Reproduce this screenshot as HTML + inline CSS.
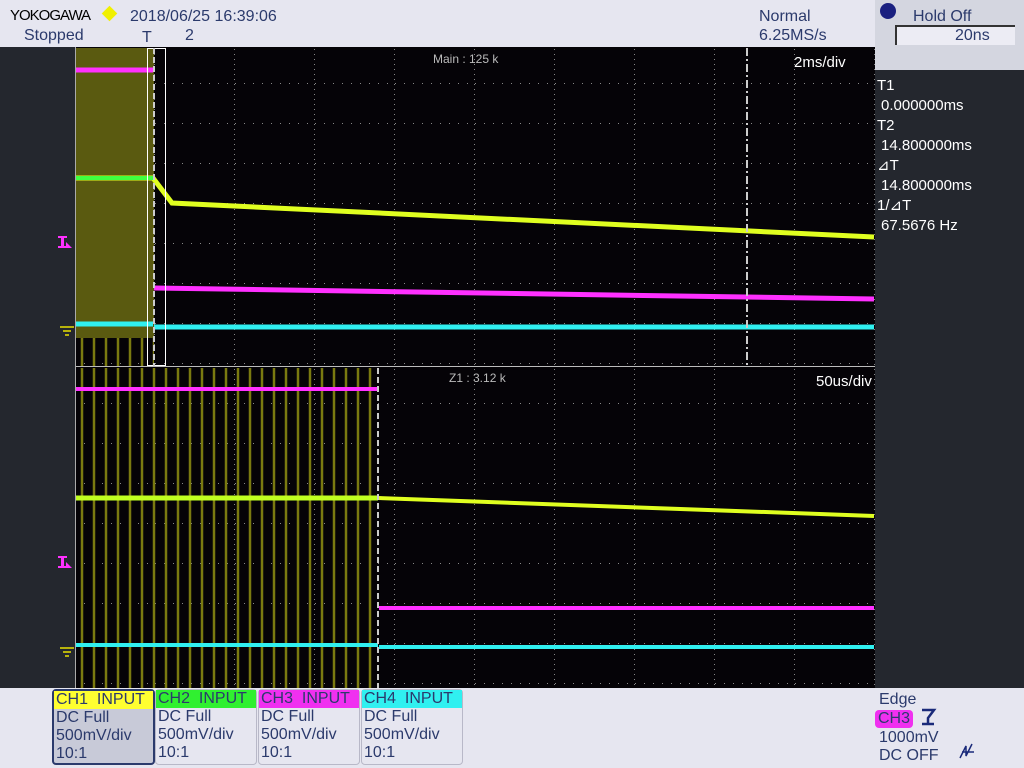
<!DOCTYPE html>
<html><head><style>
body{margin:0;width:1024px;height:768px;overflow:hidden;background:#e6e6f0;font-family:"Liberation Sans",sans-serif;position:relative}
.t{position:absolute;color:#2b3a6c;font-size:16px;white-space:nowrap;line-height:18px}
.w{position:absolute;color:#fff;font-size:15px;white-space:nowrap;line-height:20px}
.ch{position:absolute;top:689px;width:100px;height:74px;border:1px solid #b8b8c8;border-radius:4px;background:#e6e6f0;font-size:16px;color:#2b3a6c;line-height:18px}
.ch div{height:18px;padding-left:2px}
</style></head><body>
<div style="position:absolute;left:0;top:47px;width:75px;height:641px;background:#24272e"></div>
<div style="position:absolute;left:875px;top:70px;width:149px;height:618px;background:#24272e"></div>
<div style="position:absolute;left:875px;top:0;width:149px;height:70px;background:#d4d6e0"></div>
<div class="t" style="left:10px;top:7px;color:#000;font-size:15px;letter-spacing:-1px">YOKOGAWA</div>
<div style="position:absolute;left:104px;top:8px;width:11px;height:11px;background:#f0f000;transform:rotate(45deg)"></div>
<div class="t" style="left:130px;top:8px">2018/06/25 16:39:06</div>
<div class="t" style="left:24px;top:27px">Stopped</div>
<div class="t" style="left:142px;top:29px">T</div>
<div class="t" style="left:185px;top:27px">2</div>
<div class="t" style="left:759px;top:8px">Normal</div>
<div class="t" style="left:759px;top:27px">6.25MS/s</div>
<div style="position:absolute;left:880px;top:3px;width:16px;height:16px;border-radius:50%;background:#1a2080"></div>
<div class="t" style="left:913px;top:8px">Hold Off</div>
<div style="position:absolute;left:895px;top:25px;width:118px;height:18px;border-top:2px solid #333;border-left:2px solid #333;background:#ececf4"></div>
<div class="t" style="left:955px;top:27px">20ns</div>
<div class="w" style="left:877px;top:76px">T1</div>
<div class="w" style="left:881px;top:96px">0.000000ms</div>
<div class="w" style="left:877px;top:116px">T2</div>
<div class="w" style="left:881px;top:136px">14.800000ms</div>
<div class="w" style="left:877px;top:156px">⊿T</div>
<div class="w" style="left:881px;top:176px">14.800000ms</div>
<div class="w" style="left:877px;top:196px">1/⊿T</div>
<div class="w" style="left:881px;top:216px">67.5676 Hz</div>
<svg style="position:absolute;left:0;top:0" width="1024" height="768">
<defs>
<pattern id="g" x="75" y="4" width="80" height="40" patternUnits="userSpaceOnUse">
<line x1="79.5" y1="0" x2="79.5" y2="40" stroke="#888" stroke-dasharray="1 4"/>
<line x1="0" y1="39.5" x2="80" y2="39.5" stroke="#888" stroke-dasharray="1 8"/>
</pattern>
<pattern id="sp" x="80" y="0" width="12" height="400" patternUnits="userSpaceOnUse">
<line x1="2" y1="0" x2="2" y2="400" stroke="#7a7a10" stroke-width="2.5"/>
</pattern>
</defs>
<rect x="75" y="47" width="800" height="641" fill="#050307"/>
<rect x="75" y="47" width="800" height="641" fill="url(#g)"/>
<line x1="75" y1="366.5" x2="875" y2="366.5" stroke="#bbb"/>
<line x1="75.5" y1="47" x2="75.5" y2="688" stroke="#aaa"/>
<rect x="76" y="48" width="78" height="290" fill="#5a5a10"/>
<rect x="76" y="338" width="78" height="28" fill="url(#sp)"/>
<line x1="76" y1="70" x2="153" y2="70" stroke="#ff30ff" stroke-width="5"/>
<polyline points="76,178 153,178 172,203 874,237" fill="none" stroke="#e0ff20" stroke-width="5"/>
<polyline points="76,178 153,178" stroke="#40ff40" stroke-width="4"/>
<line x1="154" y1="288" x2="874" y2="299" stroke="#ff30ff" stroke-width="5"/>
<line x1="76" y1="324" x2="153" y2="324" stroke="#30f0f0" stroke-width="5"/>
<line x1="154" y1="327" x2="874" y2="327" stroke="#30f0f0" stroke-width="5"/>
<rect x="147.5" y="48.5" width="18" height="317" fill="none" stroke="#fff"/>
<line x1="154" y1="48" x2="154" y2="366" stroke="#ccc" stroke-width="2" stroke-dasharray="6 3"/>
<line x1="747" y1="48" x2="747" y2="366" stroke="#ccc" stroke-width="2" stroke-dasharray="8 3 2 3"/>
<text x="433" y="63" fill="#bbb" font-size="12" font-family="Liberation Sans">Main : 125 k</text>
<text x="794" y="67" fill="#fff" font-size="15" font-family="Liberation Sans">2ms/div</text>
<rect x="76" y="368" width="302" height="320" fill="url(#sp)"/>
<line x1="76" y1="389" x2="378" y2="389" stroke="#ff30ff" stroke-width="4"/>
<line x1="76" y1="498" x2="378" y2="498" stroke="#c0ff20" stroke-width="5"/>
<line x1="378" y1="498" x2="874" y2="516" stroke="#e0ff20" stroke-width="4"/>
<line x1="379" y1="608" x2="874" y2="608" stroke="#ff30ff" stroke-width="4"/>
<line x1="76" y1="645" x2="378" y2="645" stroke="#30f0f0" stroke-width="4"/>
<line x1="379" y1="647" x2="874" y2="647" stroke="#30f0f0" stroke-width="4"/>
<line x1="378" y1="368" x2="378" y2="688" stroke="#ccc" stroke-width="2" stroke-dasharray="6 3"/>
<text x="449" y="382" fill="#bbb" font-size="12" font-family="Liberation Sans">Z1 : 3.12 k</text>
<text x="816" y="386" fill="#fff" font-size="15" font-family="Liberation Sans">50us/div</text>
<g fill="#ff30ff"><rect x="58" y="236" width="9" height="2"/><rect x="61" y="236" width="3" height="12"/><rect x="58" y="246" width="9" height="2"/><path d="M66 242l6 6h-6z"/>
<rect x="58" y="556" width="9" height="2"/><rect x="61" y="556" width="3" height="12"/><rect x="58" y="566" width="9" height="2"/><path d="M66 562l6 6h-6z"/></g>
<g stroke="#e8e000" stroke-width="1.5"><line x1="60" y1="327" x2="74" y2="327"/><line x1="63" y1="331" x2="71" y2="331"/><line x1="65" y1="335" x2="69" y2="335"/>
<line x1="60" y1="648" x2="74" y2="648"/><line x1="63" y1="652" x2="71" y2="652"/><line x1="65" y1="656" x2="69" y2="656"/></g>
<path d="M922 710h12l-6 8v6M922 724h12" fill="none" stroke="#1a2a7a" stroke-width="2.5"/>
<path d="M960 758l6-12v10l6-12M962 752h12" fill="none" stroke="#1a2a7a" stroke-width="1.5"/>
</svg>
<div class="ch" style="left:52px;border:2px solid #2b3a6c;width:99px;height:72px;background:#c8cad8"><div style="background:#ffff30">CH1&nbsp; INPUT</div><div>DC Full</div><div>500mV/div</div><div>10:1</div></div>
<div class="ch" style="left:155px"><div style="background:#30f030">CH2&nbsp; INPUT</div><div>DC Full</div><div>500mV/div</div><div>10:1</div></div>
<div class="ch" style="left:258px"><div style="background:#f030f0">CH3&nbsp; INPUT</div><div>DC Full</div><div>500mV/div</div><div>10:1</div></div>
<div class="ch" style="left:361px"><div style="background:#30f0f0">CH4&nbsp; INPUT</div><div>DC Full</div><div>500mV/div</div><div>10:1</div></div>
<div class="t" style="left:879px;top:691px">Edge</div>
<div class="t" style="left:875px;top:710px;background:#f030f0;border-radius:4px;padding:0 3px">CH3</div>
<div class="t" style="left:879px;top:729px">1000mV</div>
<div class="t" style="left:879px;top:747px">DC OFF</div>
</body></html>
